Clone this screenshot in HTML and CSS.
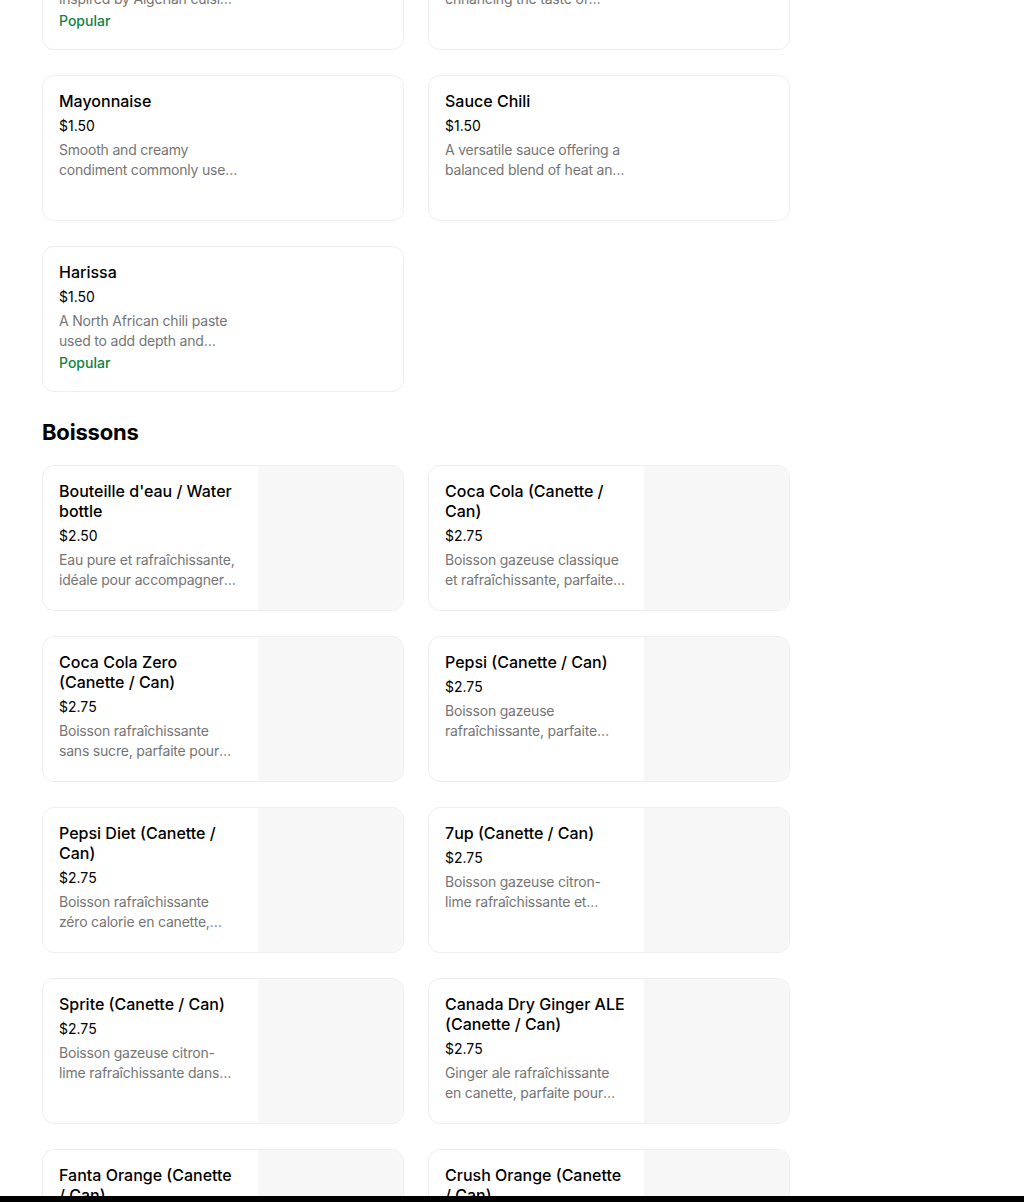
FILE: index.html
```html
<!DOCTYPE html>
<html lang="fr">
<head>
    <meta charset="UTF-8">
    <meta name="viewport" content="width=device-width, initial-scale=1.0">
    <title>Menu</title>
    <link rel="stylesheet" href="styles.css">
</head>
<body>
    <main class="menu">
        <section class="category">
            <div class="grid">
                <div class="item">
                    <div class="item-info">
                        <h3 class="item-name">Sauce Algérienne</h3>
                        <p class="item-price">$1.50</p>
                        <p class="item-desc">A spicy and tangy sauce inspired by Algerian cuisine, perfect with fries and sandwiches.</p>
                        <p class="item-tag">Popular</p>
                    </div>
                </div>
                <div class="item">
                    <div class="item-info">
                        <h3 class="item-name">Sauce Blanche</h3>
                        <p class="item-price">$1.50</p>
                        <p class="item-desc">A light garlic sauce, enhancing the taste of grilled meats and wraps.</p>
                    </div>
                </div>
                <div class="item">
                    <div class="item-info">
                        <h3 class="item-name">Mayonnaise</h3>
                        <p class="item-price">$1.50</p>
                        <p class="item-desc">Smooth and creamy condiment commonly used in sandwiches and salads.</p>
                    </div>
                </div>
                <div class="item">
                    <div class="item-info">
                        <h3 class="item-name">Sauce Chili</h3>
                        <p class="item-price">$1.50</p>
                        <p class="item-desc">A versatile sauce offering a balanced blend of heat and sweetness.</p>
                    </div>
                </div>
                <div class="item">
                    <div class="item-info">
                        <h3 class="item-name">Harissa</h3>
                        <p class="item-price">$1.50</p>
                        <p class="item-desc">A North African chili paste used to add depth and complexity to dishes.</p>
                        <p class="item-tag">Popular</p>
                    </div>
                </div>
            </div>
        </section>

        <section class="category">
            <h2 class="category-title">Boissons</h2>
            <div class="grid">
                <div class="item">
                    <div class="item-info">
                        <h3 class="item-name">Bouteille d'eau / Water bottle</h3>
                        <p class="item-price">$2.50</p>
                        <p class="item-desc">Eau pure et rafraîchissante, idéale pour accompagner votre repas.</p>
                    </div>
                    <div class="item-thumb"></div>
                </div>
                <div class="item">
                    <div class="item-info">
                        <h3 class="item-name">Coca Cola (Canette / Can)</h3>
                        <p class="item-price">$2.75</p>
                        <p class="item-desc">Boisson gazeuse classique et rafraîchissante, parfaite pour accompagner votre repas.</p>
                    </div>
                    <div class="item-thumb"></div>
                </div>
                <div class="item">
                    <div class="item-info">
                        <h3 class="item-name">Coca Cola Zero (Canette / Can)</h3>
                        <p class="item-price">$2.75</p>
                        <p class="item-desc">Boisson rafraîchissante sans sucre, parfaite pour accompagner votre repas.</p>
                    </div>
                    <div class="item-thumb"></div>
                </div>
                <div class="item">
                    <div class="item-info">
                        <h3 class="item-name">Pepsi (Canette / Can)</h3>
                        <p class="item-price">$2.75</p>
                        <p class="item-desc">Boisson gazeuse rafraîchissante, parfaite pour accompagner votre repas.</p>
                    </div>
                    <div class="item-thumb"></div>
                </div>
                <div class="item">
                    <div class="item-info">
                        <h3 class="item-name">Pepsi Diet (Canette / Can)</h3>
                        <p class="item-price">$2.75</p>
                        <p class="item-desc">Boisson rafraîchissante zéro calorie en canette, parfaite pour accompagner votre repas.</p>
                    </div>
                    <div class="item-thumb"></div>
                </div>
                <div class="item">
                    <div class="item-info">
                        <h3 class="item-name">7up (Canette / Can)</h3>
                        <p class="item-price">$2.75</p>
                        <p class="item-desc">Boisson gazeuse citron-lime rafraîchissante et pétillante en canette.</p>
                    </div>
                    <div class="item-thumb"></div>
                </div>
                <div class="item">
                    <div class="item-info">
                        <h3 class="item-name">Sprite (Canette / Can)</h3>
                        <p class="item-price">$2.75</p>
                        <p class="item-desc">Boisson gazeuse citron-lime rafraîchissante dans une canette pratique.</p>
                    </div>
                    <div class="item-thumb"></div>
                </div>
                <div class="item">
                    <div class="item-info">
                        <h3 class="item-name">Canada Dry Ginger ALE (Canette / Can)</h3>
                        <p class="item-price">$2.75</p>
                        <p class="item-desc">Ginger ale rafraîchissante en canette, parfaite pour accompagner votre repas.</p>
                    </div>
                    <div class="item-thumb"></div>
                </div>
                <div class="item">
                    <div class="item-info">
                        <h3 class="item-name">Fanta Orange (Canette / Can)</h3>
                        <p class="item-price">$2.75</p>
                        <p class="item-desc">Boisson gazeuse à l'orange, pétillante et fruitée.</p>
                    </div>
                    <div class="item-thumb"></div>
                </div>
                <div class="item">
                    <div class="item-info">
                        <h3 class="item-name">Crush Orange (Canette / Can)</h3>
                        <p class="item-price">$2.75</p>
                        <p class="item-desc">Boisson gazeuse à l'orange au goût sucré et rafraîchissant.</p>
                    </div>
                    <div class="item-thumb"></div>
                </div>
            </div>
        </section>
    </main>

    <div class="bottom-bar"></div>
</body>
</html>
```

FILE: styles.css
```css
body {
    font-family: Inter, "Liberation Sans", sans-serif;
    background-color: #ffffff;
    color: #000000;
    margin: 0;
}
.menu {
    width: 748px;
    margin: -96px 0 0 42px;
}
.category-title {
    font-size: 22px;
    line-height: 32px;
    font-weight: 700;
    letter-spacing: -0.2px;
    margin: 24px 0 17px;
}
.grid {
    display: grid;
    grid-template-columns: 362px 362px;
    gap: 25px 24px;
}
.item {
    display: flex;
    height: 146px;
    box-sizing: border-box;
    border: 1px solid #eeeeee;
    border-radius: 12px;
    overflow: hidden;
}
.item-info {
    width: 215px;
    flex-shrink: 0;
    box-sizing: border-box;
    padding: 16px 18px 16px 16px;
}
.item-thumb {
    flex: 1;
    background-color: #f7f7f7;
}
.item-name {
    font-size: 16px;
    line-height: 20px;
    font-weight: 500;
    margin: -1px 0 0;
}
.item-price {
    font-size: 14px;
    line-height: 20px;
    margin: 5px 0 0;
}
.item-desc {
    font-size: 14px;
    line-height: 20px;
    letter-spacing: -0.2px;
    color: #757575;
    margin: 4px 0 0;
    display: -webkit-box;
    -webkit-line-clamp: 2;
    -webkit-box-orient: vertical;
    overflow: hidden;
}
.item-tag {
    font-size: 14px;
    line-height: 20px;
    font-weight: 500;
    color: #0e8345;
    margin: 2px 0 0;
}
.bottom-bar {
    position: fixed;
    left: 0;
    right: 0;
    bottom: 0;
    height: 6px;
    background-color: #000000;
}
```
